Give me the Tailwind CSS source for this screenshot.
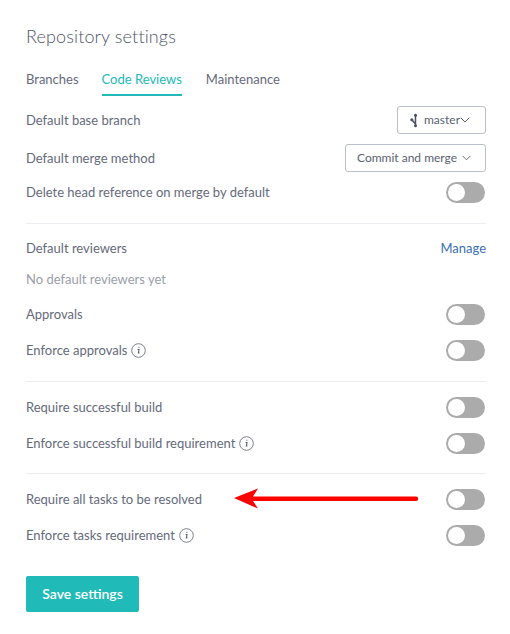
<!doctype html>
<html>
<head>
<meta charset="utf-8">
<script src="https://cdn.jsdelivr.net/npm/@tailwindcss/browser@4"></script>
</head>
<body class="bg-white">
<main class="relative w-[510px] h-[634px] overflow-hidden bg-white pl-[26px] pr-[24px] font-['Lato','Open_Sans',sans-serif] text-[13px] text-[#656a7b]">
  <h1 class="h-[72px] pt-[22px] text-[18px] leading-[28px] font-light text-[#505569] tracking-[0.13px]">Repository settings</h1>
  <nav class="flex h-[24px] gap-[23px] leading-[14px]">
    <span class="h-[24px]">Branches</span>
    <span class="h-[24px] border-b-[2px] border-[#20bbb9] text-[#20bbb9]">Code Reviews</span>
    <span class="ml-px">Maintenance</span>
  </nav>
  <div class="mt-[10px] flex h-[28px] items-center justify-between">
    <span class="pt-[2px]">Default base branch</span>
    <button class="flex h-[28px] w-[89px] items-center rounded-[3px] border border-[#b9bfcb] pl-[12px] text-[12px] text-[#5a5f72]">
      <svg class="mr-[5px] h-[15px] w-[9px]" viewBox="0 0 9 15" fill="none" stroke="#4a5060" stroke-width="1.5"><path d="M5.5 2v11M5.5 11L2 7"/><circle cx="5.5" cy="2.2" r="1.5" fill="#4a5060" stroke="none"/><circle cx="5.5" cy="12.8" r="1.5" fill="#4a5060" stroke="none"/><circle cx="1.8" cy="6.8" r="1.5" fill="#4a5060" stroke="none"/></svg>
      <span>master</span><svg class="h-[6px] w-[10px]" viewBox="0 0 10 6" fill="none" stroke="#5a5f72" stroke-width="1"><path d="M.7.7L5 5l4.3-4.3"/></svg>
    </button>
  </div>
  <div class="mt-[10px] flex h-[28px] items-center justify-between">
    <span class="pt-[2px]">Default merge method</span>
    <button class="flex h-[28px] w-[141px] items-center rounded-[3px] border border-[#b9bfcb] pl-[11px] text-[12px] text-[#5a5f72]">
      Commit and merge<svg class="ml-[5px] h-[6px] w-[9px]" viewBox="0 0 10 6" fill="none" stroke="#5a5f72" stroke-width="1"><path d="M.7.7L5 5l4.3-4.3"/></svg>
    </button>
  </div>
  <div class="mt-[10px] flex h-[21px] items-center justify-between">
    <span>Delete head reference on merge by default</span>
    <span class="mr-px h-[21px] w-[39px] rounded-full bg-[#ababab] p-[2px]"><span class="block h-[17px] w-[17px] rounded-full bg-white"></span></span>
  </div>
  <hr class="mt-[20px] border-[#ebedf0]">
  <div class="mt-[14px] flex h-[21px] items-center justify-between">
    <span>Default reviewers</span>
    <a class="text-[#3a6fb5]">Manage</a>
  </div>
  <p class="mt-[10px] h-[21px] leading-[21px] text-[#9a9ea8]">No default reviewers yet</p>
  <div class="mt-[14px] flex h-[21px] items-center justify-between">
    <span>Approvals</span>
    <span class="mr-px h-[21px] w-[39px] rounded-full bg-[#ababab] p-[2px]"><span class="block h-[17px] w-[17px] rounded-full bg-white"></span></span>
  </div>
  <div class="mt-[15px] flex h-[21px] items-center justify-between">
    <span class="flex items-center gap-[4px]">Enforce approvals
      <svg class="h-[15px] w-[15px]" viewBox="0 0 15 15" fill="none"><circle cx="7.5" cy="7.5" r="6.8" stroke="#7d8190"/><path d="M6.6 6.5h1.4l-.6 3.4h1M7.4 4.2h1" stroke="#5a5f72" stroke-width="1.1"/></svg></span>
    <span class="mr-px h-[21px] w-[39px] rounded-full bg-[#ababab] p-[2px]"><span class="block h-[17px] w-[17px] rounded-full bg-white"></span></span>
  </div>
  <hr class="mt-[20px] border-[#ebedf0]">
  <div class="mt-[15px] flex h-[21px] items-center justify-between">
    <span>Require successful build</span>
    <span class="mr-px h-[21px] w-[39px] rounded-full bg-[#ababab] p-[2px]"><span class="block h-[17px] w-[17px] rounded-full bg-white"></span></span>
  </div>
  <div class="mt-[15px] flex h-[21px] items-center justify-between">
    <span class="flex items-center gap-[4px]">Enforce successful build requirement
      <svg class="h-[15px] w-[15px]" viewBox="0 0 15 15" fill="none"><circle cx="7.5" cy="7.5" r="6.8" stroke="#7d8190"/><path d="M6.6 6.5h1.4l-.6 3.4h1M7.4 4.2h1" stroke="#5a5f72" stroke-width="1.1"/></svg></span>
    <span class="mr-px h-[21px] w-[39px] rounded-full bg-[#ababab] p-[2px]"><span class="block h-[17px] w-[17px] rounded-full bg-white"></span></span>
  </div>
  <hr class="mt-[19px] border-[#ebedf0]">
  <div class="mt-[15px] flex h-[21px] items-center justify-between">
    <span>Require all tasks to be resolved</span>
    <span class="mr-px h-[21px] w-[39px] rounded-full bg-[#ababab] p-[2px]"><span class="block h-[17px] w-[17px] rounded-full bg-white"></span></span>
  </div>
  <div class="mt-[15px] flex h-[21px] items-center justify-between">
    <span class="flex items-center gap-[4px]">Enforce tasks requirement
      <svg class="h-[15px] w-[15px]" viewBox="0 0 15 15" fill="none"><circle cx="7.5" cy="7.5" r="6.8" stroke="#7d8190"/><path d="M6.6 6.5h1.4l-.6 3.4h1M7.4 4.2h1" stroke="#5a5f72" stroke-width="1.1"/></svg></span>
    <span class="mr-px h-[21px] w-[39px] rounded-full bg-[#ababab] p-[2px]"><span class="block h-[17px] w-[17px] rounded-full bg-white"></span></span>
  </div>
  <button class="mt-[30px] h-[36px] w-[113px] rounded-[2px] bg-[#20bbb9] pb-[2px] text-[14px] font-semibold text-white">Save settings</button>
  <svg class="absolute left-[234px] top-[488px]" width="185" height="21" viewBox="0 0 185 21" fill="none"><path d="M0 10L24 .5L19 8.5L182 8.5A2.2 2.2 0 0 1 182 12.9L19 12.9L24 20.5Z" fill="#ff0000"/></svg>
</main>
</body>
</html>
